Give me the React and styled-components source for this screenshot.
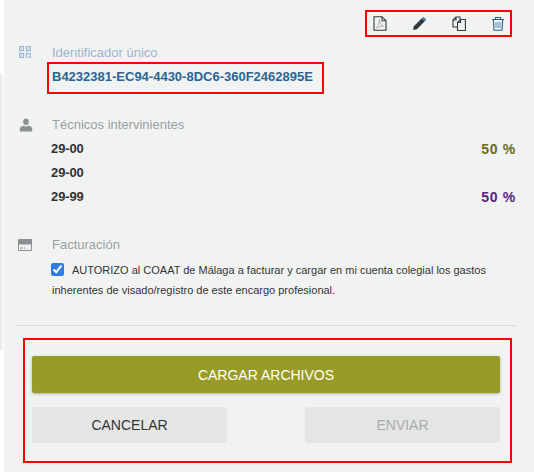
import React from "react";
import styled, { createGlobalStyle } from "styled-components";

const Global = createGlobalStyle`
  html, body { margin: 0; padding: 0; background: #fff; }
  body { font-family: "Liberation Sans", Arial, sans-serif; }
`;
const Page = styled.div`
  width: 534px; height: 472px; overflow: hidden;
  display: flex; background: #fff;
`;
const Rail = styled.div`
  width: 4px; flex: none; margin-top: 73px; height: 277px;
  background: linear-gradient(90deg, #e6e6e6 0, #f4f4f4 2px, #fff 4px);
`;
const Panel = styled.div`
  flex: 1; background: #f1f3f3; padding: 10px 18px 0 12px;
  display: flex; flex-direction: column; min-width: 0;
`;
const Toolbar = styled.div`
  align-self: flex-end; box-sizing: border-box; width: 147px; height: 27px;
  margin-right: 4px; border: 2px solid #f00;
  display: flex; align-items: center; justify-content: space-between; padding: 0 5px 0 6px;
`;
const ToolIcon = styled.svg`width: 14px; height: 15px; display: block;`;
const Section = styled.div`
  display: grid; grid-template-columns: 36px 1fr; align-items: start;
  margin-top: ${p => p.$top}px;
`;
const SideIcon = styled.svg`width: ${p => p.$w || 14}px; height: ${p => p.$h || 14}px; margin: ${p => p.$y}px 0 0 ${p => p.$x}px; display: block; color: ${p => p.$color};`;
const Label = styled.div`
  font-size: 13px; line-height: 16px; color: ${p => p.$color || "#9b9e9f"};
`;
const IdBox = styled.div`
  box-sizing: border-box; width: 277px; height: 32px; margin: 1px 0 0 -5px;
  border: 2px solid #f00; padding: 0 0 4px 3px;
  display: flex; align-items: center;
  font: bold 13px "Liberation Sans", Arial, sans-serif; color: #2a6496;
`;
const Rows = styled.div`margin-top: 3px;`;
const Row = styled.div`
  display: flex; justify-content: space-between; align-items: center; height: 24px;
  font: bold 13px "Liberation Sans", Arial, sans-serif; color: #333;
  letter-spacing: -0.1px; margin-left: -1px;
`;
const Percent = styled.span`
  font: bold 14px "Liberation Sans", Arial, sans-serif; letter-spacing: 0.7px; color: ${p => p.$color};
  margin-top: 2px;
`;
const Agreement = styled.label`
  display: block; margin-top: 7px; font-size: 11px; line-height: 20px; color: #333;
`;
const Check = styled.input`
  width: 13px; height: 13px; margin: 0 8px 0 -1px; vertical-align: -2px; accent-color: #2f7de1;
`;
const Divider = styled.hr`
  border: 0; height: 1px; background: #d8d9d9; margin: 25px 0 0 0;
`;
const Footer = styled.div`
  box-sizing: border-box; width: 489px; height: 125px; margin: 12px 0 0 7px;
  border: 2px solid #f00; padding: 16px 10px 0 7px;
  display: flex; flex-direction: column; gap: 14px;
`;
const Primary = styled.button`
  height: 37px; border: 0; border-radius: 2px; background: #989b26; color: #fff;
  font: 400 14px "Liberation Sans", Arial, sans-serif; padding: 0;
  box-shadow: 0 1px 3px rgba(0,0,0,.28);
`;
const ButtonRow = styled.div`display: flex; justify-content: space-between;`;
const Secondary = styled.button`
  width: 195px; height: 36px; border: 0; border-radius: 2px; background: #e4e6e6;
  color: ${p => p.disabled ? "#a9abab" : "#333"}; font: 400 14px "Liberation Sans", Arial, sans-serif; padding: 0;
`;

const PdfIcon = () => (
  <ToolIcon viewBox="0 0 14 15" fill="none">
    <path d="M1 .7h8l4 4v9.6H1z" stroke="#33393f" strokeWidth="1.1" />
    <path d="M9 .7v4h4" stroke="#33393f" strokeWidth="1.1" />
    <path d="M6.3 3.500c.6 3-1 6.500-3.200 8.500 2-1 4.800-1.800 7.500-1.500-2-.8-3.800-3.500-4.300-7z" stroke="#a9a9a9" strokeWidth=".9" />
  </ToolIcon>
);
const PencilIcon = () => (
  <ToolIcon viewBox="0 0 14 15">
    <path d="M9.800 2.300l3 3-7.900 7.900-3.800.9.800-3.900z" fill="#33393f" />
    <path d="M10.700 1.400a1 1 0 0 1 1.400 0l1.600 1.600a1 1 0 0 1 0 1.400l-.9.900-3-3z" fill="#3d7fb5" />
  </ToolIcon>
);
const CopyIcon = () => (
  <ToolIcon viewBox="0 0 14 15" fill="none" stroke="#33393f" strokeWidth="1.1">
    <path d="M8 3.500V1H4L1 4v7h4.500" />
    <path d="M4 1v3H1" />
    <path d="M5.500 6.500l3-3h4.900v11H5.500z" fill="#f1f3f3" />
    <path d="M8.500 3.500v3h-3" />
  </ToolIcon>
);
const TrashIcon = () => (
  <ToolIcon viewBox="0 0 14 15" fill="none" stroke="#2a5f8f" strokeWidth="1.1">
    <path d="M1 3.500h12M4.500 3.500V1.500h5v2M2.300 3.500l.7 10.800h8l.7-10.800" />
    <path d="M5 6v6M7 6v6M9 6v6" stroke="#5f97c9" />
  </ToolIcon>
);
const QrIcon = () => (
  <SideIcon viewBox="0 0 14 14" $x={3} $y={1} $w={12} $h={12} $color="#9dbad3" fill="currentColor">
    <path fillRule="evenodd" d="M0 0h6v6H0zM1.500 1.500v3h3v-3zM8 0h6v6H8zM9.500 1.500v3h3v-3zM0 8h6v6H0zM1.500 9.500v3h3v-3z" />
    <path d="M2.500 2.500h1v1h-1zM10.500 2.500h1v1h-1zM2.500 10.500h1v1h-1zM8 8h3v2H9.500v4H8zM12 8h2v3h-2zM11 12h3v2h-3z" />
  </SideIcon>
);
const UserIcon = () => (
  <SideIcon viewBox="0 0 14 14" $x={3} $y={1} $color="#8d9092" fill="currentColor">
    <ellipse cx="7" cy="3.800" rx="2.800" ry="3.300" />
    <path d="M.8 13.500V10.500c0-1.600 2.700-2.600 4.200-2.800.6.500 1.200.7 2 .7s1.400-.2 2-.7c1.500.2 4.200 1.200 4.200 2.800v3z" />
  </SideIcon>
);
const CardIcon = () => (
  <SideIcon viewBox="0 0 14 12" $x={2} $y={2} $h={12} $color="#8d9092" fill="currentColor">
    <path fillRule="evenodd" d="M1 0h12a1 1 0 0 1 1 1v10a1 1 0 0 1-1 1H1a1 1 0 0 1-1-1V1a1 1 0 0 1 1-1zM1 5.500V11h12V5.500z" />
    <path d="M2 8.500h3v1H2zM6 8.500h1.500v1H6z" />
  </SideIcon>
);

export default function App() {
  return (
    <Page>
      <Global />
      <Rail />
      <Panel>
        <Toolbar>
          <PdfIcon /><PencilIcon /><CopyIcon /><TrashIcon />
        </Toolbar>
        <Section $top={8}>
          <QrIcon />
          <div>
            <Label $color="#9bb5cc">Identificador único</Label>
            <IdBox>B4232381-EC94-4430-8DC6-360F2462895E</IdBox>
          </div>
        </Section>
        <Section $top={23}>
          <UserIcon />
          <div>
            <Label>Técnicos intervinientes</Label>
            <Rows>
              <Row>29-00<Percent $color="#6e6a1b">50 %</Percent></Row>
              <Row>29-00</Row>
              <Row>29-99<Percent $color="#5f1c85">50 %</Percent></Row>
            </Rows>
          </div>
        </Section>
        <Section $top={29}>
          <CardIcon />
          <div>
            <Label>Facturación</Label>
            <Agreement>
              <Check type="checkbox" defaultChecked readOnly />
              AUTORIZO al COAAT de Málaga a facturar y cargar en mi cuenta colegial los gastos inherentes de visado/registro de este encargo profesional.
            </Agreement>
          </div>
        </Section>
        <Divider />
        <Footer>
          <Primary>CARGAR ARCHIVOS</Primary>
          <ButtonRow>
            <Secondary>CANCELAR</Secondary>
            <Secondary disabled>ENVIAR</Secondary>
          </ButtonRow>
        </Footer>
      </Panel>
    </Page>
  );
}
